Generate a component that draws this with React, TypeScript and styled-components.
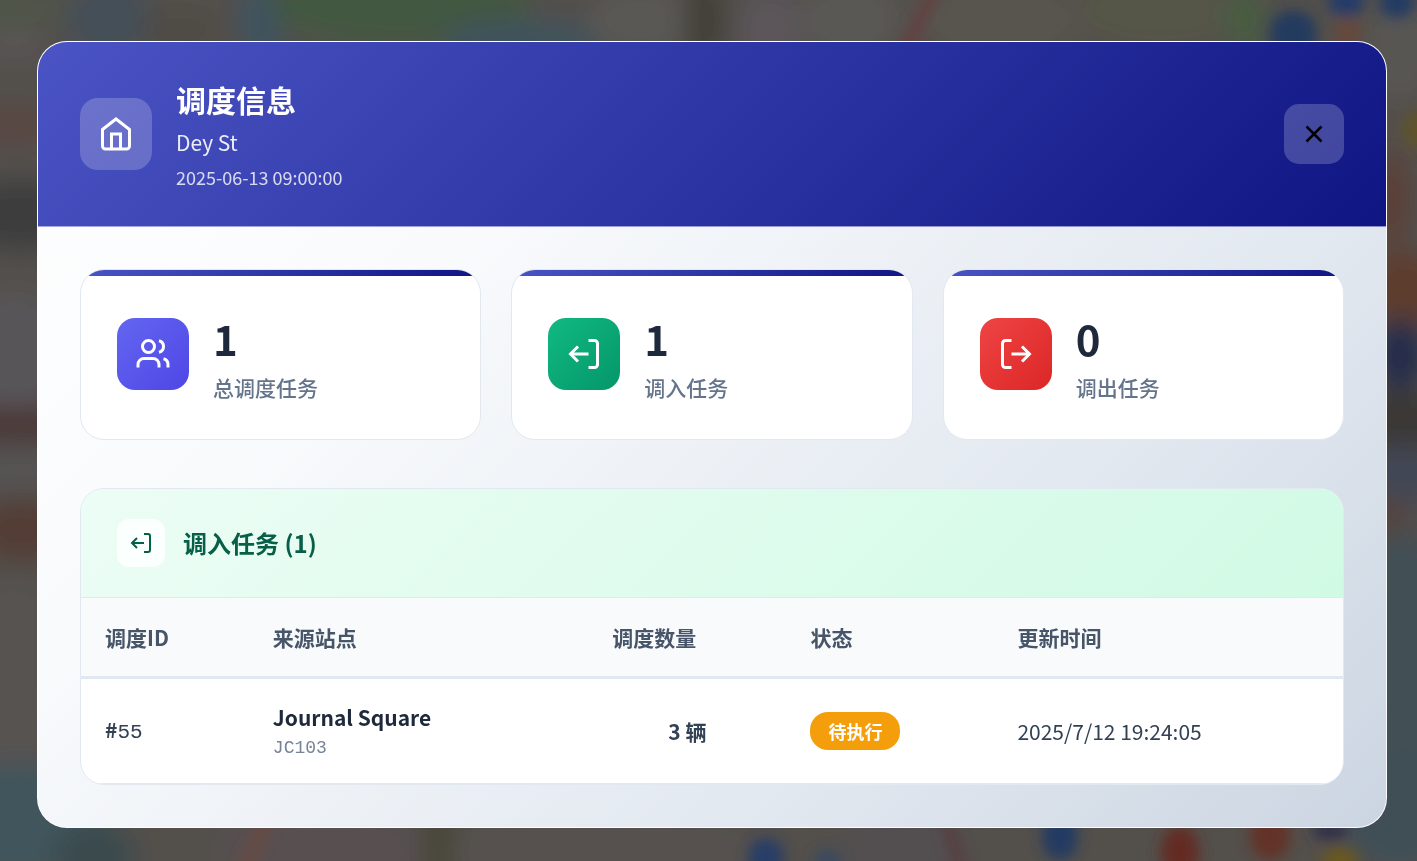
import React from 'react';
import styled, { createGlobalStyle } from 'styled-components';

const GlobalStyle = createGlobalStyle`
  *, *::before, *::after { box-sizing: border-box; }
  body {
    margin: 0;
    background: #524f4c;
    font-family: "Noto Sans CJK SC", "Noto Sans", sans-serif;
    color: #1e293b;
  }
  h1, h2, p { margin: 0; }
`;

const brandGradient = 'linear-gradient(135deg, #4b54c4 0%, #0f1583 100%)';

const Backdrop = styled.svg`
  position: fixed;
  inset: 0;
  width: 100%;
  height: 100%;
  z-index: -1;
`;

const Overlay = styled.div`
  min-height: 100vh;
  padding: 41px 30px 33px 37px;
`;

const Modal = styled.section`
  max-width: 1600px;
  margin: 0 auto;
  border: 1px solid rgba(255, 255, 255, 0.9);
  border-radius: 30px;
  overflow: hidden;
  background: linear-gradient(135deg, #ffffff 0%, #f8fafc 30%, #e2e8f0 70%, #cbd5e1 100%) border-box;
`;

const ModalHeader = styled.header`
  display: flex;
  align-items: center;
  justify-content: space-between;
  padding: 34px 42px;
  background: ${brandGradient};
  border-bottom: 1px solid rgba(255, 255, 255, 0.5);
`;

const HeaderLead = styled.div`
  display: flex;
  align-items: center;
  gap: 24px;
`;

const HeaderIcon = styled.div`
  display: flex;
  align-items: center;
  justify-content: center;
  width: 72px;
  height: 72px;
  border-radius: 18px;
  color: #fff;
  background: rgba(255, 255, 255, 0.2);
`;

const HeaderText = styled.div`
  display: flex;
  flex-direction: column;
  gap: 5px;
`;

const Title = styled.h1`
  font-size: 30px;
  line-height: 46px;
  font-weight: 700;
  color: #fff;
`;

const Station = styled.p`
  font-size: 21px;
  line-height: 30px;
  color: rgba(255, 255, 255, 0.9);
`;

const Timestamp = styled.p`
  font-size: 18px;
  line-height: 30px;
  color: rgba(255, 255, 255, 0.8);
`;

const CloseButton = styled.button`
  display: flex;
  align-items: center;
  justify-content: center;
  width: 60px;
  height: 60px;
  padding: 0;
  border: 0;
  border-radius: 15px;
  color: #000;
  background: rgba(255, 255, 255, 0.2);
  cursor: pointer;
`;

const ModalBody = styled.div`
  display: flex;
  flex-direction: column;
  gap: 48px;
  padding: 42px;
`;

const Stats = styled.div`
  display: grid;
  grid-template-columns: repeat(3, 1fr);
  gap: 30px;
`;

const StatCard = styled.article`
  display: flex;
  flex-direction: column;
  border: 1px solid #e2e8f0;
  border-radius: 24px;
  overflow: hidden;
  background: #fff;

  &::before {
    content: "";
    height: 6px;
    background: ${brandGradient};
  }
`;

const StatContent = styled.div`
  display: flex;
  align-items: center;
  gap: 24px;
  padding: 28px 36px 35px;
`;

const StatIcon = styled.div<{ $from: string; $to: string }>`
  display: flex;
  align-items: center;
  justify-content: center;
  width: 72px;
  height: 72px;
  border-radius: 18px;
  color: #fff;
  background: linear-gradient(135deg, ${(p) => p.$from}, ${(p) => p.$to});
`;

const StatValue = styled.p`
  font-size: 42px;
  line-height: 67px;
  font-weight: 700;
`;

const StatLabel = styled.p`
  font-size: 21px;
  line-height: 33px;
  font-weight: 500;
  color: #64748b;
`;

const TaskSection = styled.section`
  border: 1px solid #e2e8f0;
  border-radius: 24px;
  overflow: hidden;
  background: #fff;
`;

const TaskHeader = styled.header`
  display: flex;
  align-items: center;
  gap: 18px;
  padding: 30px 36px;
  color: #065f46;
  background: linear-gradient(135deg, #ecfdf5, #d1fae5);
  border-bottom: 1px solid #e2e8f0;
`;

const TaskIcon = styled.div`
  display: flex;
  align-items: center;
  justify-content: center;
  width: 48px;
  height: 48px;
  border-radius: 12px;
  background: rgba(255, 255, 255, 0.8);
`;

const TaskTitle = styled.h2`
  font-size: 24px;
  line-height: 36px;
  font-weight: 700;
`;

const Table = styled.table`
  width: 100%;
  table-layout: fixed;
  border-collapse: separate;
  border-spacing: 0;
`;

const Col = styled.col<{ $width?: string }>`
  width: ${(p) => p.$width ?? 'auto'};
`;

const Th = styled.th`
  padding: 24px;
  text-align: left;
  font-size: 21px;
  line-height: 30px;
  font-weight: 700;
  color: #475569;
  background: #f8fafc;
  border-bottom: 3px solid #e2e8f0;
`;

const Td = styled.td<{ $center?: boolean }>`
  height: 105px;
  padding: 0 24px;
  text-align: ${(p) => (p.$center ? 'center' : 'left')};
  vertical-align: middle;
  font-size: 21px;
  line-height: 30px;
  font-weight: ${(p) => (p.$center ? 700 : 400)};
  color: #334155;
  border-bottom: 1px solid #e2e8f0;
`;

const TaskId = styled.div`
  font-family: "Liberation Mono", monospace;
  font-weight: 400;
`;

const Hash = styled.span`
  font-family: "Noto Sans CJK SC", sans-serif;
  font-weight: 700;
`;

const StationName = styled.div`
  font-size: 21px;
  line-height: 34px;
  font-weight: 700;
  color: #1e293b;
`;

const StationCode = styled.div`
  font-family: "Liberation Mono", monospace;
  font-size: 18px;
  line-height: 28px;
  color: #76849a;
`;

const Status = styled.span`
  display: inline-block;
  padding: 6px 18px;
  border-radius: 18px;
  font-size: 18px;
  line-height: 26px;
  font-weight: 700;
  color: #fff;
  background: #f59e0b;
`;

type IconName = 'home' | 'users' | 'in' | 'out' | 'close';

const iconPaths: Record<IconName, React.ReactNode> = {
  home: (
    <>
      <path d="M3 9l9-7 9 7v11a2 2 0 0 1-2 2H5a2 2 0 0 1-2-2z" />
      <path d="M9 22V12h6v10" />
    </>
  ),
  users: (
    <>
      <path d="M16 21v-2a4 4 0 0 0-4-4H6a4 4 0 0 0-4 4v2" />
      <circle cx="9" cy="7" r="4" />
      <path d="M22 21v-2a4 4 0 0 0-3-3.87" />
      <path d="M16 3.13a4 4 0 0 1 0 7.75" />
    </>
  ),
  in: (
    <>
      <path d="M15 3h4a2 2 0 0 1 2 2v14a2 2 0 0 1-2 2h-4" />
      <path d="M8 7l-5 5 5 5" />
      <path d="M3 12h12" />
    </>
  ),
  out: (
    <>
      <path d="M9 21H5a2 2 0 0 1-2-2V5a2 2 0 0 1 2-2h4" />
      <path d="M16 17l5-5-5-5" />
      <path d="M21 12H9" />
    </>
  ),
  close: <path d="M18 6L6 18M6 6l12 12" />,
};

function Icon({ name, size }: { name: IconName; size: number }) {
  return (
    <svg width={size} height={size} viewBox="0 0 24 24" fill="none" stroke="currentColor" strokeWidth="2" aria-hidden="true">
      {iconPaths[name]}
    </svg>
  );
}

type Blob = [cx: number, cy: number, rx: number, ry: number, fill: string];

/* Land, water and parks of the blurred city map */
const mapAreas: Blob[] = [
  [10, 10, 60, 22, '#50544a'],
  [15, 45, 30, 14, '#5c5556'],
  [110, 20, 44, 36, '#445058'],
  [180, 30, 40, 20, '#4f4c45'],
  [262, 22, 24, 44, '#40525e'],
  [400, 6, 130, 38, '#43583f'],
  [520, 40, 80, 22, '#41535b'],
  [640, 20, 50, 34, '#5a5854'],
  [705, 20, 20, 44, '#434138'],
  [770, 30, 32, 40, '#5c555a'],
  [850, 20, 50, 40, '#5a5955'],
  [1000, 20, 80, 40, '#59544f'],
  [1160, 10, 80, 34, '#555747'],
  [1245, 20, 22, 34, '#495b42'],
  [1400, 50, 34, 50, '#595752'],
  [1392, 200, 16, 50, '#5c3e34'],
  [1405, 290, 40, 40, '#5d3e2f'],
  [1400, 355, 30, 36, '#252f4c'],
  [1400, 422, 50, 32, '#3a3836'],
  [1402, 475, 34, 32, '#434754'],
  [1390, 525, 12, 28, '#583d36'],
  [1402, 660, 60, 130, '#435054'],
  [1400, 810, 60, 60, '#405057'],
  [10, 125, 50, 18, '#5a4743'],
  [20, 215, 60, 36, '#3e3d3d'],
  [15, 350, 50, 60, '#595458'],
  [20, 425, 60, 18, '#4c3837'],
  [18, 470, 40, 24, '#555253'],
  [22, 530, 44, 32, '#533c35'],
  [15, 680, 60, 100, '#575251'],
  [20, 820, 90, 56, '#40545c'],
  [95, 856, 40, 34, '#3b4c4e'],
  [320, 850, 100, 40, '#584f51'],
  [440, 845, 18, 40, '#494739'],
  [600, 850, 150, 40, '#57514f'],
  [900, 850, 60, 40, '#524f51'],
];

/* Station pins, drawn over the areas */
const mapPins: Blob[] = [
  [1293, 34, 24, 24, '#243a5e'],
  [1346, 2, 18, 14, '#203b6a'],
  [1397, 2, 18, 16, '#233b64'],
  [1348, 32, 13, 14, '#684a3a'],
  [1417, 130, 14, 20, '#5f522a'],
  [766, 858, 18, 20, '#263d68'],
  [828, 862, 14, 12, '#384962'],
  [1060, 836, 18, 24, '#233a62'],
  [1180, 852, 19, 26, '#632b21'],
  [1270, 836, 20, 24, '#633025'],
  [1330, 830, 18, 10, '#2d2f48'],
  [1340, 862, 18, 14, '#6b581b'],
];

function MapBackdrop() {
  const draw = ([cx, cy, rx, ry, fill]: Blob) => (
    <ellipse key={`${cx}-${cy}`} cx={cx} cy={cy} rx={rx} ry={ry} fill={fill} />
  );
  return (
    <Backdrop viewBox="0 0 1417 861" preserveAspectRatio="none" aria-hidden="true">
      <defs>
        <filter id="soft" filterUnits="userSpaceOnUse" x="-80" y="-80" width="1577" height="1021">
          <feGaussianBlur stdDeviation="12" />
        </filter>
        <filter id="pin" filterUnits="userSpaceOnUse" x="-80" y="-80" width="1577" height="1021">
          <feGaussianBlur stdDeviation="7" />
        </filter>
      </defs>
      <rect width="1417" height="861" fill="#52504b" />
      <g filter="url(#soft)">
        <rect x="-80" y="-80" width="1577" height="1021" fill="#52504b" />
        {mapAreas.map(draw)}
      </g>
      <g strokeWidth="12" fill="none" filter="url(#pin)">
        <path d="M940-20L895 70" stroke="#653f41" />
        <path d="M275 800L240 880" stroke="#69483f" />
        <path d="M940 800L965 880" stroke="#563c3f" />
      </g>
      <g filter="url(#pin)">{mapPins.map(draw)}</g>
    </Backdrop>
  );
}

const stats: { icon: IconName; value: number; label: string; from: string; to: string }[] = [
  { icon: 'users', value: 1, label: '总调度任务', from: '#6366f1', to: '#4f46e5' },
  { icon: 'in', value: 1, label: '调入任务', from: '#10b981', to: '#059669' },
  { icon: 'out', value: 0, label: '调出任务', from: '#ef4444', to: '#dc2626' },
];

export default function App() {
  return (
    <>
      <GlobalStyle />
      <MapBackdrop />
      <Overlay>
        <Modal role="dialog" aria-labelledby="dialog-title">
          <ModalHeader>
            <HeaderLead>
              <HeaderIcon><Icon name="home" size={36} /></HeaderIcon>
              <HeaderText>
                <Title id="dialog-title">调度信息</Title>
                <Station>Dey St</Station>
                <Timestamp>2025-06-13 09:00:00</Timestamp>
              </HeaderText>
            </HeaderLead>
            <CloseButton type="button" aria-label="关闭"><Icon name="close" size={30} /></CloseButton>
          </ModalHeader>
          <ModalBody>
            <Stats>
              {stats.map((s) => (
                <StatCard key={s.label}>
                  <StatContent>
                    <StatIcon $from={s.from} $to={s.to}><Icon name={s.icon} size={36} /></StatIcon>
                    <div>
                      <StatValue>{s.value}</StatValue>
                      <StatLabel>{s.label}</StatLabel>
                    </div>
                  </StatContent>
                </StatCard>
              ))}
            </Stats>
            <TaskSection>
              <TaskHeader>
                <TaskIcon><Icon name="in" size={24} /></TaskIcon>
                <TaskTitle>调入任务 (1)</TaskTitle>
              </TaskHeader>
              <Table>
                <colgroup>
                  <Col $width="13.3%" />
                  <Col $width="26.9%" />
                  <Col $width="15.7%" />
                  <Col $width="16.4%" />
                  <Col />
                </colgroup>
                <thead>
                  <tr>
                    <Th scope="col">调度ID</Th>
                    <Th scope="col">来源站点</Th>
                    <Th scope="col">调度数量</Th>
                    <Th scope="col">状态</Th>
                    <Th scope="col">更新时间</Th>
                  </tr>
                </thead>
                <tbody>
                  <tr>
                    <Td><TaskId><Hash>#</Hash>55</TaskId></Td>
                    <Td>
                      <StationName>Journal Square</StationName>
                      <StationCode>JC103</StationCode>
                    </Td>
                    <Td $center>3 辆</Td>
                    <Td><Status>待执行</Status></Td>
                    <Td>2025/7/12 19:24:05</Td>
                  </tr>
                </tbody>
              </Table>
            </TaskSection>
          </ModalBody>
        </Modal>
      </Overlay>
    </>
  );
}
